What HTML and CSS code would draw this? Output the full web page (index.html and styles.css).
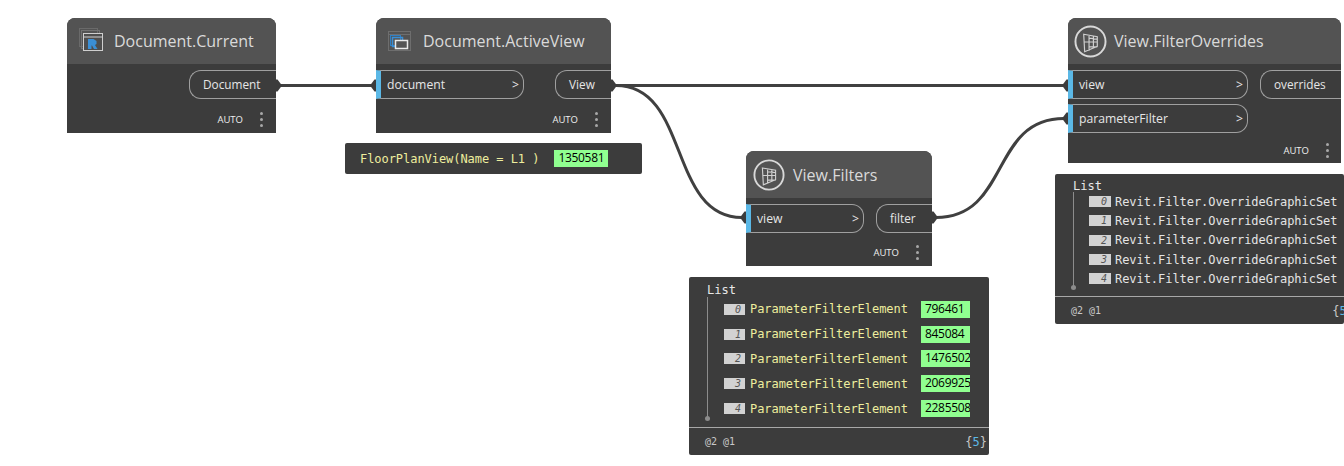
FILE: index.html
```html
<!DOCTYPE html>
<html lang="en">
<head>
    <meta charset="UTF-8">
    <title>Dynamo Graph</title>
    <link rel="stylesheet" href="styles.css">
</head>
<body>
<div class="canvas">
    <svg class="wires" width="1344" height="466" viewBox="0 0 1344 466" fill="none">
        <path d="M280 85.500H372"/>
        <path d="M616 85.500H1064"/>
        <path d="M616 85.500C690 85.500 668 217.500 742 217.500"/>
        <path d="M936 217.500C1010 217.500 990 118.500 1064 118.500"/>
        <g class="tips">
            <path d="M276 79.500h1.500l4.500 6-4.500 6H276z"/>
            <path d="M376 79.500h-1.500l-4.500 6 4.500 6h1.500z"/>
            <path d="M611 79.500h1.500l4.500 6-4.500 6H611z"/>
            <path d="M746 211.500h-1.500l-4.500 6 4.500 6h1.500z"/>
            <path d="M932 211.500h1.500l4.500 6-4.500 6H932z"/>
            <path d="M1068 79.500h-1.500l-4.500 6 4.500 6h1.500z"/>
            <path d="M1068 112.500h-1.500l-4.500 6 4.500 6h1.500z"/>
        </g>
    </svg>

    <!-- Document.Current -->
    <div class="node node-current">
        <div class="node-head">
            <svg class="icon-square" width="26" height="26" viewBox="0 0 26 26" fill="none">
                <rect x="0.500" y="0.500" width="18" height="18" stroke="#6a6a6a"/>
                <rect x="2.500" y="2.500" width="18" height="18" stroke="#727272"/>
                <rect x="4.500" y="5.500" width="19" height="17" fill="#4e4e4e" stroke="#cfcfcf"/>
                <path d="M5 9H23" stroke="#cfcfcf"/>
                <path d="M9 21V11h5.500l3 2v3l-1.500 1 2.500 4h-3.500l-2-3.500H12.500V21z" fill="#3a8fd6"/>
            </svg>
            <span class="node-title">Document.Current</span>
        </div>
        <div class="node-ports">
            <div class="inputs"></div>
            <div class="outputs"><div class="pill-out">Document</div></div>
        </div>
        <div class="node-foot"><span class="auto">AUTO</span><span class="dots"><i></i><i></i><i></i></span></div>
    </div>

    <!-- Document.ActiveView -->
    <div class="node node-active">
        <div class="node-head">
            <svg class="icon-square" width="26" height="26" viewBox="0 0 26 26" fill="none">
                <rect x="0.500" y="3.500" width="22" height="19" stroke="#6e6e6e"/>
                <path d="M1 6.500H22" stroke="#6e6e6e"/>
                <rect x="2.500" y="7.500" width="10" height="10" stroke="#2f7fc4"/>
                <rect x="4.500" y="9.500" width="10" height="9" stroke="#3a8fd6" stroke-width="1.500"/>
                <rect x="7.500" y="12.500" width="12" height="8" fill="#555" stroke="#eaeaea" stroke-width="1.500"/>
            </svg>
            <span class="node-title">Document.ActiveView</span>
        </div>
        <div class="node-ports">
            <div class="inputs">
                <div class="pill-in"><span>document</span><b>&gt;</b></div>
            </div>
            <div class="outputs"><div class="pill-out">View</div></div>
        </div>
        <div class="node-foot"><span class="auto">AUTO</span><span class="dots"><i></i><i></i><i></i></span></div>
    </div>

    <!-- View.Filters -->
    <div class="node node-filters">
        <div class="node-head">
            <svg class="icon-round" viewBox="0 0 34 34" fill="none">
                <circle cx="17" cy="17" r="15.500" stroke="#d8d8d8" stroke-width="2"/>
                <path d="M10 9.500l14 2.500v10l-13 5.500zM15.500 10.500v16M20 11.500v12M15.500 13.500l8.500 1M10.500 17.500h13.500M15.500 22.500h8.500" stroke="#d0d0d0" stroke-width="1.200"/>
            </svg>
            <span class="node-title">View.Filters</span>
        </div>
        <div class="node-ports">
            <div class="inputs">
                <div class="pill-in"><span>view</span><b>&gt;</b></div>
            </div>
            <div class="outputs"><div class="pill-out">filter</div></div>
        </div>
        <div class="node-foot"><span class="auto">AUTO</span><span class="dots"><i></i><i></i><i></i></span></div>
    </div>

    <!-- View.FilterOverrides -->
    <div class="node node-overrides">
        <div class="node-head">
            <svg class="icon-round" viewBox="0 0 34 34" fill="none">
                <circle cx="17" cy="17" r="15.500" stroke="#d8d8d8" stroke-width="2"/>
                <path d="M10 9.500l14 2.500v10l-13 5.500zM15.500 10.500v16M20 11.500v12M15.500 13.500l8.500 1M10.500 17.500h13.500M15.500 22.500h8.500" stroke="#d0d0d0" stroke-width="1.200"/>
            </svg>
            <span class="node-title">View.FilterOverrides</span>
        </div>
        <div class="node-ports">
            <div class="inputs">
                <div class="pill-in"><span>view</span><b>&gt;</b></div>
                <div class="pill-in"><span>parameterFilter</span><b>&gt;</b></div>
            </div>
            <div class="outputs"><div class="pill-out">overrides</div></div>
        </div>
        <div class="node-foot"><span class="auto">AUTO</span><span class="dots"><i></i><i></i><i></i></span></div>
    </div>

    <!-- previews -->
    <div class="preview preview-single">
        <span class="value">FloorPlanView(Name = L1 )</span>
        <span class="elem-id">1350581</span>
    </div>

    <div class="preview preview-filters">
        <div class="list-name">List</div>
        <div class="list-tree">
            <div class="row"><span class="idx">0</span><span class="value">ParameterFilterElement</span><span class="elem-id">796461</span></div>
            <div class="row"><span class="idx">1</span><span class="value">ParameterFilterElement</span><span class="elem-id">845084</span></div>
            <div class="row"><span class="idx">2</span><span class="value">ParameterFilterElement</span><span class="elem-id">1476502</span></div>
            <div class="row"><span class="idx">3</span><span class="value">ParameterFilterElement</span><span class="elem-id">2069925</span></div>
            <div class="row"><span class="idx">4</span><span class="value">ParameterFilterElement</span><span class="elem-id">2285508</span></div>
        </div>
        <div class="preview-foot"><span>@2 @1</span><span class="count">{<em>5</em>}</span></div>
    </div>

    <div class="preview preview-overrides">
        <div class="list-name">List</div>
        <div class="list-tree">
            <div class="row"><span class="idx">0</span><span class="value white">Revit.Filter.OverrideGraphicSet</span></div>
            <div class="row"><span class="idx">1</span><span class="value white">Revit.Filter.OverrideGraphicSet</span></div>
            <div class="row"><span class="idx">2</span><span class="value white">Revit.Filter.OverrideGraphicSet</span></div>
            <div class="row"><span class="idx">3</span><span class="value white">Revit.Filter.OverrideGraphicSet</span></div>
            <div class="row"><span class="idx">4</span><span class="value white">Revit.Filter.OverrideGraphicSet</span></div>
        </div>
        <div class="preview-foot"><span>@2 @1</span><span class="count">{<em>5</em>}</span></div>
    </div>
</div>
</body>
</html>
```

FILE: styles.css
```css
html, body {
    margin: 0;
    padding: 0;
    background: #fff;
    overflow: hidden;
}

.canvas {
    position: relative;
    width: 1344px;
    height: 466px;
    overflow: hidden;
    font-family: "Open Sans", sans-serif;
}

.wires {
    position: absolute;
    left: 0;
    top: 0;
    z-index: 2;
}

.wires > path {
    stroke: #404040;
    stroke-width: 3;
}

.tips path {
    fill: #3c3c3c;
}

/* nodes */
.node {
    position: absolute;
    display: flex;
    flex-direction: column;
    background: #3c3c3c;
    border-radius: 8px 8px 0 0;
    color: #e6e6e6;
}

.node-current { left: 67px; top: 18px; width: 209px; height: 115px; }
.node-active { left: 376px; top: 18px; width: 235px; height: 115px; }
.node-filters { left: 746px; top: 151px; width: 186px; height: 115px; }
.node-overrides { left: 1068px; top: 18px; width: 273px; height: 145px; }

.node-head {
    display: flex;
    align-items: center;
    gap: 9px;
    height: 46px;
    padding-left: 12px;
    background: #535353;
    border-radius: 8px 8px 0 0;
}

.node-filters .node-head {
    height: 47px;
    padding-left: 7px;
    gap: 8px;
}

.node-overrides .node-head {
    padding-left: 6px;
    gap: 7px;
}

.icon-round {
    width: 33px;
    height: 33px;
}

.node-filters .icon-round {
    width: 32px;
    height: 32px;
}

.node-title {
    font-size: 16px;
    color: #dadada;
}

.node-ports {
    display: flex;
    justify-content: space-between;
    padding-top: 6px;
}

.inputs {
    display: flex;
    flex-direction: column;
    gap: 5px;
}

.pill-in {
    display: flex;
    align-items: center;
    justify-content: space-between;
    box-sizing: border-box;
    height: 29px;
    padding: 0 4px 1px 6px;
    border: 1px solid #a0a0a0;
    border-left: 5px solid #5bb8e6;
    border-radius: 0 12px 12px 0;
    font-size: 12.200px;
}

.pill-in b {
    font-weight: 400;
}

.node-active .pill-in { width: 148px; }
.node-filters .pill-in { width: 118px; }
.node-overrides .pill-in { width: 180px; }

.pill-out {
    display: flex;
    align-items: center;
    box-sizing: border-box;
    height: 29px;
    padding: 0 0 1px 13px;
    border: 1px solid #a0a0a0;
    border-right: none;
    border-radius: 12px 0 0 12px;
    font-size: 11.800px;
}

.node-current .pill-out { width: 87px; }
.node-active .pill-out { width: 56px; }
.node-filters .pill-out { width: 56px; }
.node-overrides .pill-out { width: 81px; }

.node-foot {
    flex: 1;
    display: flex;
    align-items: center;
    justify-content: flex-end;
    gap: 17px;
    padding: 6px 13px 0 0;
}

.node-overrides .node-foot {
    padding: 4px 12px 0 0;
}

.auto {
    font-size: 9.500px;
    font-weight: 500;
    color: #eee;
}

.dots {
    display: flex;
    flex-direction: column;
    gap: 3px;
}

.dots i {
    display: block;
    width: 3px;
    height: 3px;
    border-radius: 50%;
    background: #a8a8a8;
}

/* watch previews */
.preview {
    position: absolute;
    box-sizing: border-box;
    background: #3c3c3c;
    border-radius: 2px;
    font-family: "DejaVu Sans Mono", monospace;
    font-size: 12px;
    color: #e8e8e8;
    overflow: hidden;
}

.preview-single {
    left: 345px;
    top: 143px;
    width: 297px;
    height: 31px;
    display: flex;
    align-items: center;
    gap: 15px;
    padding-left: 15px;
}

.preview-filters { left: 689px; top: 277px; width: 300px; height: 178px; }
.preview-overrides { left: 1055px; top: 174px; width: 289px; height: 150px; }

.value {
    color: #eeee9e;
    letter-spacing: -0.050px;
    white-space: nowrap;
}

.value.white {
    color: #e4e4e4;
}

.elem-id {
    flex: none;
    box-sizing: border-box;
    width: 54px;
    height: 17px;
    padding-left: 4px;
    background: #90ff90;
    color: #000;
    font-family: "Open Sans", sans-serif;
    font-size: 12px;
    letter-spacing: -0.300px;
    line-height: 15px;
    overflow: hidden;
}

.list-name {
    padding: 7px 0 0 18px;
    line-height: 13px;
}

.list-tree {
    position: relative;
    margin-left: 18px;
    border-left: 1px solid #8c8c8c;
}

.list-tree::after {
    content: "";
    position: absolute;
    left: -3px;
    bottom: -2px;
    width: 5px;
    height: 5px;
    border-radius: 50%;
    background: #8c8c8c;
}

.row {
    display: flex;
    align-items: center;
    height: 24.800px;
    padding-left: 16px;
}

.idx {
    flex: none;
    box-sizing: border-box;
    width: 21px;
    height: 11px;
    margin-right: 5px;
    padding-right: 4px;
    background: #d2d2d2;
    color: #555;
    font-size: 10px;
    font-style: italic;
    line-height: 11px;
    text-align: right;
}

.preview-filters .list-tree {
    height: 122px;
}

.preview-filters .row .value {
    width: 171px;
    flex: none;
}

.preview-filters .elem-id {
    width: 49px;
}

.preview-overrides .list-name {
    padding-top: 6px;
    line-height: 12px;
}

.preview-overrides .list-tree {
    height: 96px;
}

.preview-overrides .row {
    height: 19.300px;
    padding-left: 15px;
}

.preview-overrides .idx {
    width: 22px;
    margin-right: 4px;
}

.preview-foot {
    display: flex;
    justify-content: space-between;
    align-items: center;
    height: 27px;
    margin-top: 8px;
    padding: 0 2px 0 16px;
    border-top: 1px solid #a8a8a8;
    font-size: 10px;
    color: #c8c8c8;
}

.count {
    font-size: 12px;
}

.count em {
    font-style: normal;
    color: #5bb8e6;
}

.preview-overrides .preview-foot {
    padding-right: 0;
}

.preview-overrides .count {
    margin-right: -10px;
}
```
